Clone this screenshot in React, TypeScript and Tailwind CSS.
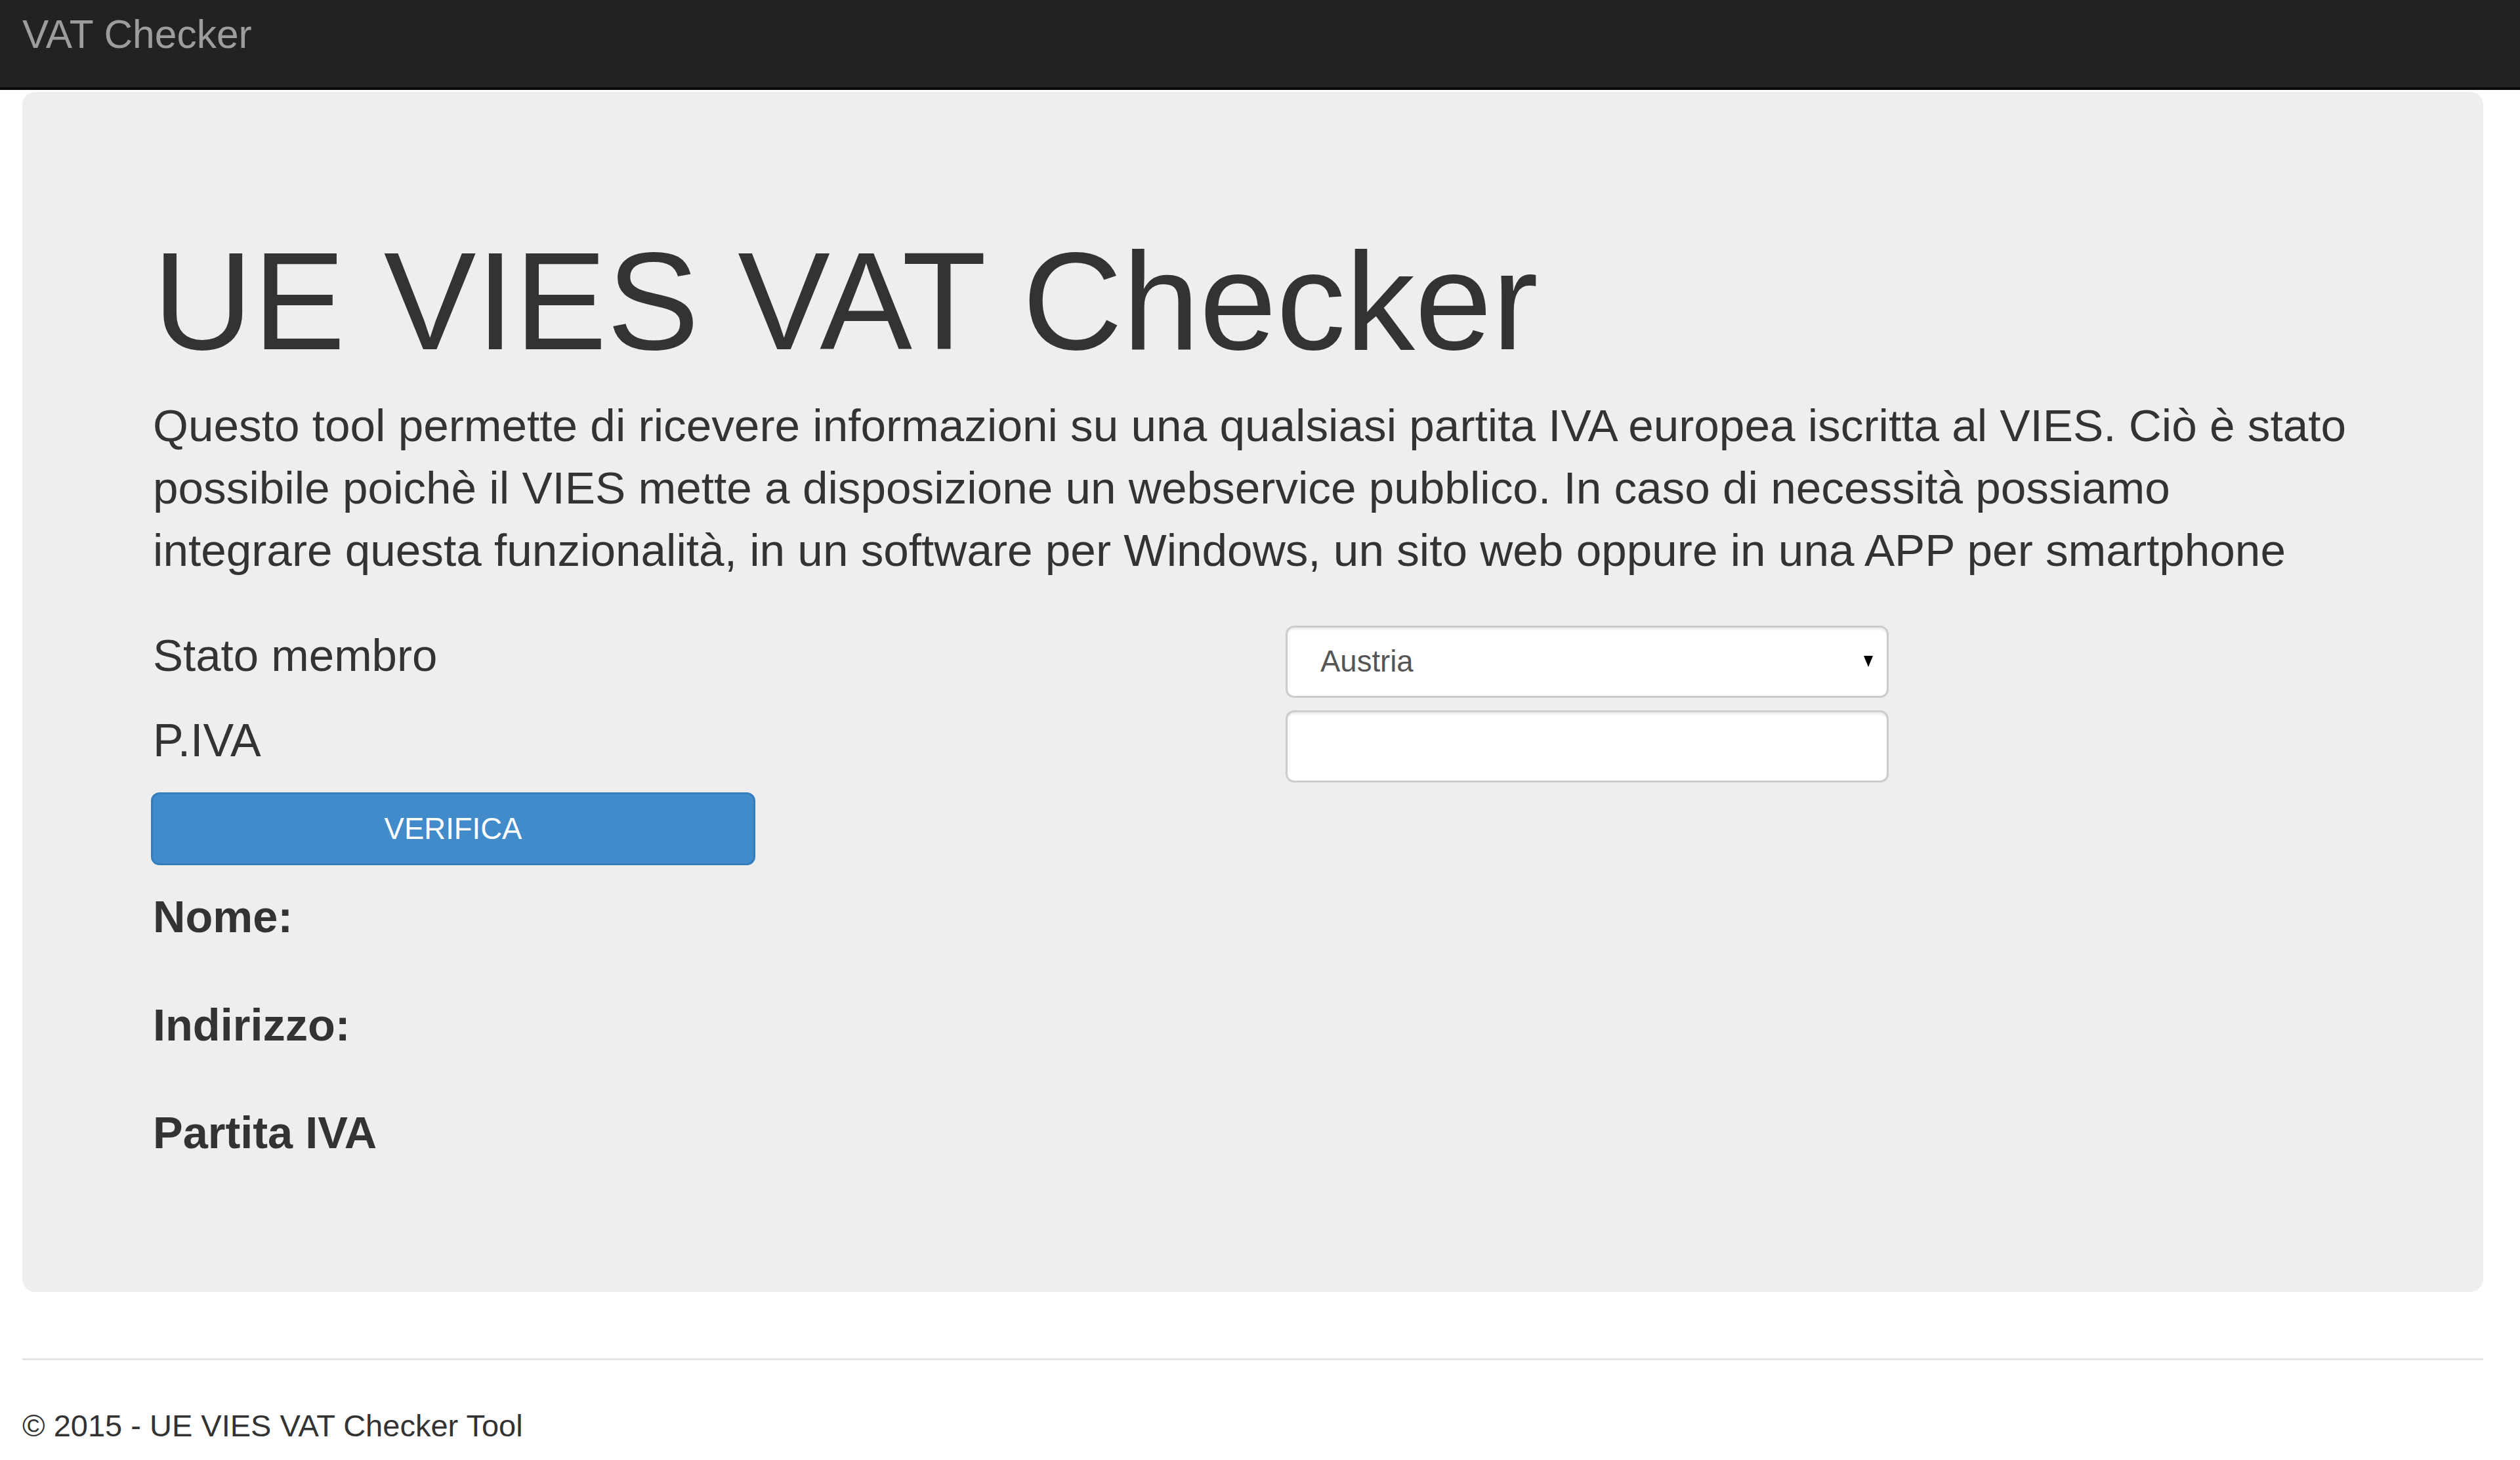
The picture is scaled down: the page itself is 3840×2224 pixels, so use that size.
import React, { useState } from "react";

const STATI = [
  "Austria",
  "Belgio",
  "Bulgaria",
  "Cipro",
  "Repubblica Ceca",
  "Germania",
  "Danimarca",
  "Estonia",
  "Grecia",
  "Spagna",
  "Finlandia",
  "Francia",
  "Croazia",
  "Ungheria",
  "Irlanda",
  "Italia",
  "Lituania",
  "Lussemburgo",
  "Lettonia",
  "Malta",
  "Paesi Bassi",
  "Polonia",
  "Portogallo",
  "Romania",
  "Svezia",
  "Slovenia",
  "Slovacchia",
];

export default function App() {
  const [stato, setStato] = useState("Austria");
  const [piva, setPiva] = useState("");

  return (
    <div className="min-h-screen bg-white font-['Liberation_Sans',Arial,sans-serif] text-[#333]">
      {/* top navbar */}
      <nav className="h-[137px] border-b-4 border-[#080808] bg-[#222] pl-[34px] pt-[22px]">
        <a href="#" className="text-[60.5px] leading-none text-[#9d9d9d]">
          VAT Checker
        </a>
      </nav>

      <div className="ml-[34px] w-[3750px]">
        {/* jumbotron */}
        <section className="mt-[3px] rounded-[20px] bg-[#eeeeee] px-[199px] pt-[214px] pb-[195px]">
          <h1 className="text-[211px] font-normal leading-none">UE VIES VAT Checker</h1>
          <p className="mt-[36px] whitespace-nowrap text-[69.3px] leading-[95px]">
            Questo tool permette di ricevere informazioni su una qualsiasi partita IVA europea iscritta al VIES. Ciò è stato
            <br />
            possibile poichè il VIES mette a disposizione un webservice pubblico. In caso di necessità possiamo
            <br />
            integrare questa funzionalità, in un software per Windows, un sito web oppure in una APP per smartphone
          </p>

          <form className="mt-[65px]" onSubmit={(e) => e.preventDefault()}>
            <div className="grid h-[130px] grid-cols-[1726px_919px]">
              <label className="text-[69px] leading-[95px]">Stato membro</label>
              <div className="relative mt-[2px] h-[110px]">
                <select
                  value={stato}
                  onChange={(e) => setStato(e.target.value)}
                  className="h-full w-full appearance-none rounded-[13px] border-[3px] border-[#ccc] bg-white pl-[50px] text-[45.5px] text-[#555] shadow-[inset_0_3px_3px_rgba(0,0,0,0.075)] outline-none"
                >
                  {STATI.map((s) => (
                    <option key={s}>{s}</option>
                  ))}
                </select>
                <svg
                  className="pointer-events-none absolute right-[21px] top-[44px] h-[20px] w-[20px]"
                  viewBox="0 0 20 20"
                >
                  <path d="M3 2 L17 2 L10 19 Z" fill="#000" />
                </svg>
              </div>
            </div>
            <div className="grid h-[126px] grid-cols-[1726px_919px]">
              <label className="text-[70px] leading-[95px]">P.IVA</label>
              <input
                value={piva}
                onChange={(e) => setPiva(e.target.value)}
                className="mt-[1px] h-[110px] w-full rounded-[13px] border-[3px] border-[#ccc] bg-white px-[39px] text-[45.5px] text-[#555] shadow-[inset_0_3px_3px_rgba(0,0,0,0.075)] outline-none"
              />
            </div>
            <button
              type="submit"
              className="-ml-[3px] block h-[111px] w-[921px] rounded-[13px] border-[3px] border-[#357ebd] bg-[#428bca] text-[45.5px] leading-none text-white"
            >
              VERIFICA
            </button>
          </form>

          {/* risultati */}
          <div className="mt-[31px] text-[68.5px] font-bold leading-[95px]">
            <p>Nome:</p>
            <p className="mt-[70px]">Indirizzo:</p>
            <p className="mt-[69px]">Partita IVA</p>
          </div>
        </section>

        <footer>
          <hr className="mt-[101px] border-0 border-t-[3px] border-[#e5e5e5]" />
          <p className="mt-[76px] text-[47px] leading-none">© 2015 - UE VIES VAT Checker Tool</p>
        </footer>
      </div>
    </div>
  );
}
